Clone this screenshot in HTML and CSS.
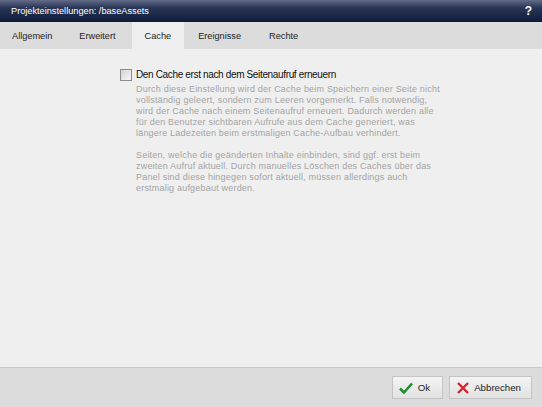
FILE: index.html
```html
<!DOCTYPE html>
<html lang="de">
<head>
    <meta charset="UTF-8">
    <title>Projekteinstellungen</title>
    <link rel="stylesheet" href="styles.css">
</head>
<body>
    <div class="dialog">
        <div class="titlebar">
            <span class="title">Projekteinstellungen: /baseAssets</span>
            <span class="help">?</span>
        </div>
        <div class="tabs">
            <div class="tab">Allgemein</div>
            <div class="tab">Erweitert</div>
            <div class="tab active">Cache</div>
            <div class="tab">Ereignisse</div>
            <div class="tab">Rechte</div>
        </div>
        <div class="content">
            <div class="option">
                <span class="checkbox"></span>
                <div class="option-body">
                    <div class="option-label">Den Cache erst nach dem Seitenaufruf erneuern</div>
                    <p class="hint">Durch diese Einstellung wird der Cache beim Speichern einer Seite nicht<br>
                        vollständig geleert, sondern zum Leeren vorgemerkt. Falls notwendig,<br>
                        wird der Cache nach einem Seitenaufruf erneuert. Dadurch werden alle<br>
                        für den Benutzer sichtbaren Aufrufe aus dem Cache generiert, was<br>
                        längere Ladezeiten beim erstmaligen Cache-Aufbau verhindert.</p>
                    <p class="hint">Seiten, welche die geänderten Inhalte einbinden, sind ggf. erst beim<br>
                        zweiten Aufruf aktuell. Durch manuelles Löschen des Caches über das<br>
                        Panel sind diese hingegen sofort aktuell, müssen allerdings auch<br>
                        erstmalig aufgebaut werden.</p>
                </div>
            </div>
        </div>
        <div class="footer">
            <button class="btn btn-ok">
                <svg width="14" height="14" viewBox="0 0 14 14"><path d="M1 7.5 L5 11.5 L13 2.5" fill="none" stroke="#1f8f30" stroke-width="2.6" stroke-linejoin="round"/></svg>
                Ok
            </button>
            <button class="btn">
                <svg width="14" height="14" viewBox="0 0 14 14"><path d="M2 2 L12 12 M12 2 L2 12" fill="none" stroke="#d9232d" stroke-width="2.4"/></svg>
                Abbrechen
            </button>
        </div>
    </div>
</body>
</html>
```

FILE: styles.css
```css
body {
    margin: 0;
    font-family: "Liberation Sans", Arial, sans-serif;
    background: #efefef;
}
.dialog {
    width: 542px;
    height: 407px;
    display: flex;
    flex-direction: column;
}
.titlebar {
    height: 22px;
    display: flex;
    align-items: center;
    justify-content: space-between;
    padding: 0 10px 0 11px;
    background: linear-gradient(#636c88, #2a3656 35%, #0d1b3b);
    color: #fff;
    font-size: 9.2px;
}
.help {
    font-weight: bold;
    font-size: 12px;
}
.tabs {
    height: 27px;
    display: flex;
    background: #dcdcdc;
    font-size: 9.2px;
    color: #222;
}
.tab {
    padding: 0 14px;
    display: flex;
    align-items: center;
}
.tab:first-child {
    padding-left: 12px;
    padding-right: 13px;
}
.tab:nth-child(2) {
    padding-right: 16px;
}
.tab.active {
    background: #efefef;
    padding: 0 13px;
}
.content {
    flex: 1;
    background: #efefef;
    padding: 19px 0 0 120px;
}
.option {
    display: flex;
    gap: 4px;
}
.checkbox {
    width: 10px;
    height: 10px;
    margin-top: 1px;
    border: 1px solid #8c8c8c;
    background: linear-gradient(135deg, #d4d4d4, #f8f8f8);
}
.option-label {
    font-size: 10px;
    letter-spacing: -0.35px;
    color: #111;
    line-height: 13px;
}
.hint {
    margin: 3px 0 11px;
    white-space: nowrap;
    font-size: 9px;
    line-height: 11px;
    color: #a4a4a4;
    letter-spacing: 0.2px;
}
.footer {
    height: 39px;
    border-top: 1px solid #c8c8c8;
    background: #dcdcdc;
    display: flex;
    justify-content: flex-end;
    align-items: center;
    gap: 6px;
    padding-right: 10px;
}
.btn {
    height: 23px;
    display: flex;
    align-items: center;
    gap: 4px;
    padding: 0 10px 0 6px;
    border: 1px solid #c4c4c4;
    background: linear-gradient(#f4f4f4, #e2e2e2);
    font-family: "Liberation Sans", Arial, sans-serif;
    font-size: 9.7px;
    color: #222;
}
.btn-ok {
    gap: 5px;
    padding-right: 12px;
}
```
